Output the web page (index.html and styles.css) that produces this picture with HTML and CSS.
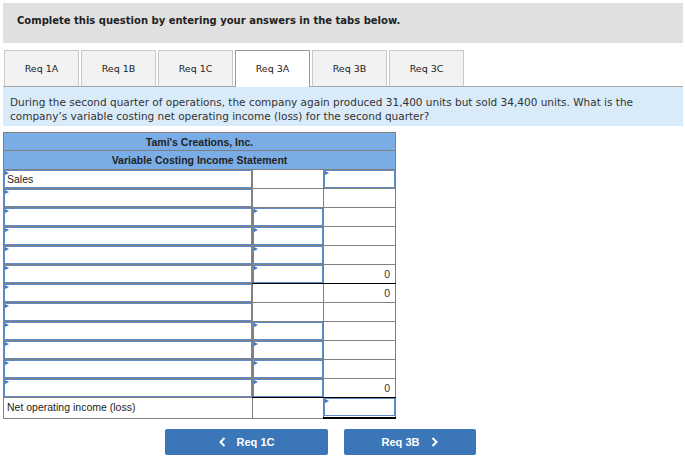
FILE: index.html
```html
<!DOCTYPE html>
<html>
<head>
<meta charset="utf-8">
<link rel="stylesheet" href="styles.css">
</head>
<body>
<div class="page">
  <div class="banner">Complete this question by entering your answers in the tabs below.</div>
  <div class="tabs">
    <div class="tab">Req 1A</div>
    <div class="tab">Req 1B</div>
    <div class="tab">Req 1C</div>
    <div class="tab active">Req 3A</div>
    <div class="tab">Req 3B</div>
    <div class="tab">Req 3C</div>
  </div>
  <div class="question">During the second quarter of operations, the company again produced 31,400 units but sold 34,400 units. What is the company’s variable costing net operating income (loss) for the second quarter?</div>
  <table class="stmt">
    <colgroup><col class="c1"><col class="c2"><col class="c3"></colgroup>
    <tr class="h1"><th colspan="3">Tami's Creations, Inc.</th></tr>
    <tr class="h2"><th colspan="3">Variable Costing Income Statement</th></tr>
    <tr><td><div class="inp">Sales</div></td><td></td><td><div class="inp"></div></td></tr>
    <tr><td><div class="inp"></div></td><td></td><td></td></tr>
    <tr><td><div class="inp"></div></td><td><div class="inp"></div></td><td></td></tr>
    <tr><td><div class="inp"></div></td><td><div class="inp"></div></td><td></td></tr>
    <tr><td><div class="inp"></div></td><td><div class="inp"></div></td><td></td></tr>
    <tr><td><div class="inp"></div></td><td><div class="inp"></div></td><td class="num">0</td></tr>
    <tr><td><div class="inp"></div></td><td class="bt"></td><td class="num bt">0</td></tr>
    <tr><td><div class="inp"></div></td><td></td><td></td></tr>
    <tr><td><div class="inp"></div></td><td><div class="inp"></div></td><td></td></tr>
    <tr><td><div class="inp"></div></td><td><div class="inp"></div></td><td></td></tr>
    <tr><td><div class="inp"></div></td><td><div class="inp"></div></td><td></td></tr>
    <tr><td><div class="inp"></div></td><td><div class="inp"></div></td><td class="num">0</td></tr>
    <tr class="net"><td class="label">Net operating income (loss)</td><td class="bt"></td><td class="bt bb"><div class="inp"></div></td></tr>
  </table>
  <div class="nav">
    <button class="btn prev"><svg class="chev" width="7" height="10" viewBox="0 0 7 10"><polyline points="5.5,1 1.5,5 5.5,9" fill="none" stroke="#fff" stroke-width="2"/></svg><span>Req 1C</span></button>
    <button class="btn next"><span>Req 3B</span><svg class="chev" width="7" height="10" viewBox="0 0 7 10"><polyline points="1.5,1 5.5,5 1.5,9" fill="none" stroke="#fff" stroke-width="2"/></svg></button>
  </div>
</div>
</body>
</html>
```
FILE: styles.css
```css
body {
  margin: 0;
  background: #fff;
}
.page {
  padding: 3px 2px 0 3px;
}
.banner {
  height: 40px;
  box-sizing: border-box;
  background: #e0e0e0;
  padding: 12px 0 0 14px;
  font: bold 10px "DejaVu Sans", Verdana, sans-serif;
  color: #222;
}
.tabs {
  display: flex;
  gap: 2px;
  margin-top: 7px;
  padding-left: 1px;
  border-bottom: 1px solid #a8a8a8;
}
.tab {
  width: 75px;
  height: 36px;
  box-sizing: border-box;
  background: #f2f2f2;
  border: 1px solid #c8c8c8;
  border-bottom: none;
  display: flex;
  align-items: center;
  justify-content: center;
  font: 9.5px "DejaVu Sans", Verdana, sans-serif;
  color: #222;
}
.tab.active {
  background: #fff;
  border-color: #9a9a9a;
  height: 37px;
  margin-bottom: -1px;
  padding-bottom: 1px;
}
.question {
  background: #d9ebf9;
  height: 39px;
  box-sizing: border-box;
  padding: 8px 7px 0 7px;
  font: 10.5px/14px "DejaVu Sans", Verdana, sans-serif;
  color: #333;
}
.stmt {
  margin-top: 6px;
  width: 392px;
  border-collapse: collapse;
  table-layout: fixed;
  font: 10.5px "Liberation Sans", Arial, sans-serif;
  color: #222;
}
.c1 { width: 249px; }
.c2 { width: 71px; }
.c3 { width: 72px; }
.stmt th, .stmt td {
  border: 1px solid #808080;
  padding: 0;
}
.stmt th {
  background: #7aade6;
  font-weight: bold;
  color: #222;
  text-align: center;
}
.h1 th { height: 17px; }
.h2 th { height: 18px; }
.stmt td {
  height: 18px;
  vertical-align: top;
}
.inp {
  position: relative;
  height: 18px;
  box-sizing: border-box;
  border: 1px solid #5f8ac6;
  padding: 1px 2px 0 2px;
  line-height: 15px;
}
.inp::before {
  content: "";
  position: absolute;
  top: 0;
  left: 0;
  border-left: 4px solid #3b78c9;
  border-top: 2.5px solid transparent;
  border-bottom: 2.5px solid transparent;
}
.num {
  text-align: right;
  padding-right: 5px !important;
  line-height: 18px;
  color: #333;
}
.label {
  padding-left: 3px !important;
  line-height: 19px;
  vertical-align: middle !important;
}
.net td { height: 19px; }
.stmt td.bt { border-top: 1px double #000; }
.stmt td.bb { border-bottom: 2px solid #000; }
.nav {
  display: flex;
  gap: 16px;
  margin-top: 10px;
  padding-left: 162px;
}
.btn {
  height: 26px;
  border: none;
  border-radius: 2px;
  background: #3a76b8;
  color: #fff;
  font: bold 11px "Liberation Sans", Arial, sans-serif;
  display: flex;
  align-items: center;
  justify-content: center;
  gap: 11px;
  padding: 0;
}
.prev { width: 163px; }
.next { width: 132px; gap: 12px; }
.chev { display: block; }
```
